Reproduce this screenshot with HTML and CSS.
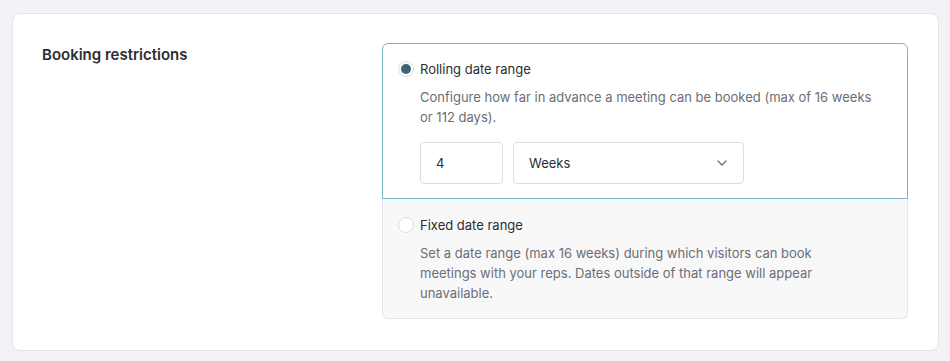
FILE: index.html
```html
<!DOCTYPE html>
<html lang="en">
<head>
  <meta charset="UTF-8">
  <title>Booking restrictions</title>
  <link rel="stylesheet" href="styles.css">
</head>
<body>

  <div class="cartao">
    <h3 class="titulo-secao">Booking restrictions</h3>

    <div class="opcoes">
      <!-- Opção selecionada -->
      <div class="opcao opcao-ativa">
        <label class="opcao-cabecalho">
          <span class="radio radio-marcado"></span>
          Rolling date range
        </label>
        <p class="opcao-descricao">Configure how far in advance a meeting can be booked (max of 16 weeks<br>or 112 days).</p>
        <div class="campos">
          <div class="campo campo-numero">4</div>
          <div class="campo campo-select">
            Weeks
            <svg class="seta" width="10" height="6" viewBox="0 0 10 6">
              <path d="M1 1l4 4 4-4" fill="none" stroke="#6b6e76" stroke-width="1.3" stroke-linecap="round" stroke-linejoin="round"/>
            </svg>
          </div>
        </div>
      </div>

      <div class="opcao opcao-inativa">
        <label class="opcao-cabecalho">
          <span class="radio"></span>
          Fixed date range
        </label>
        <p class="opcao-descricao">Set a date range (max 16 weeks) during which visitors can book<br>meetings with your reps. Dates outside of that range will appear<br>unavailable.</p>
      </div>
    </div>
  </div>

</body>
</html>
```

FILE: styles.css
```css
:root {
  --fundo: #f3f2f7;
  --branco: #ffffff;
  --texto: #2b2d33;
  --texto-suave: #6b6e76;
  --borda: #e4e4ea;
  --borda-campo: #dcdde2;
  --azul-ativo: #7db4ca;
  --radio: #3e6478;
}

body {
  font-family: Inter, 'Noto Sans', sans-serif;
  background-color: var(--fundo);
  color: var(--texto);
  margin: 0;
  padding: 13px 11px 11px 12px;
}

.cartao {
  display: flex;
  background-color: var(--branco);
  border: 1px solid var(--borda);
  border-radius: 8px;
  padding: 29px 30px 30px 29px;
  height: 277px;
}

.titulo-secao {
  width: 340px;
  margin: 0;
  font-size: 15px;
  font-weight: 600;
  line-height: 22px;
  padding-top: 1px;
}

.opcoes {
  flex: 1;
  display: flex;
  flex-direction: column;
}

.opcao {
  padding: 15px 15px 14px 15px;
}

.opcao-ativa {
  border: 1px solid var(--azul-ativo);
  border-radius: 6px 6px 0 0;
}

.opcao-inativa {
  background-color: #f8f8f9;
  border: 1px solid var(--borda);
  border-top: none;
  border-radius: 0 0 6px 6px;
  padding-top: 16px;
  padding-bottom: 15px;
}

.opcao-cabecalho {
  display: flex;
  align-items: center;
  gap: 6px;
  font-size: 13px;
  line-height: 20px;
}

.radio {
  width: 14px;
  height: 14px;
  border: 1px solid var(--borda-campo);
  border-radius: 50%;
  background-color: var(--branco);
  box-sizing: content-box;
  position: relative;
}

.radio-marcado::after {
  content: '';
  position: absolute;
  top: 2px;
  left: 2px;
  width: 10px;
  height: 10px;
  border-radius: 50%;
  background-color: var(--radio);
}

.opcao-descricao {
  margin: 8px 0 0 22px;
  white-space: nowrap;
  font-size: 13px;
  line-height: 20px;
  color: var(--texto-suave);
}

.campos {
  display: flex;
  gap: 10px;
  margin: 15px 0 0 22px;
}

.campo {
  display: flex;
  align-items: center;
  height: 40px;
  border: 1px solid var(--borda-campo);
  border-radius: 4px;
  background-color: var(--branco);
  font-size: 13px;
  padding: 0 15px;
  box-sizing: content-box;
}

.campo-numero {
  width: 51px;
}

.campo-select {
  width: 199px;
  justify-content: space-between;
}

.seta {
  margin-right: 1px;
}
```
